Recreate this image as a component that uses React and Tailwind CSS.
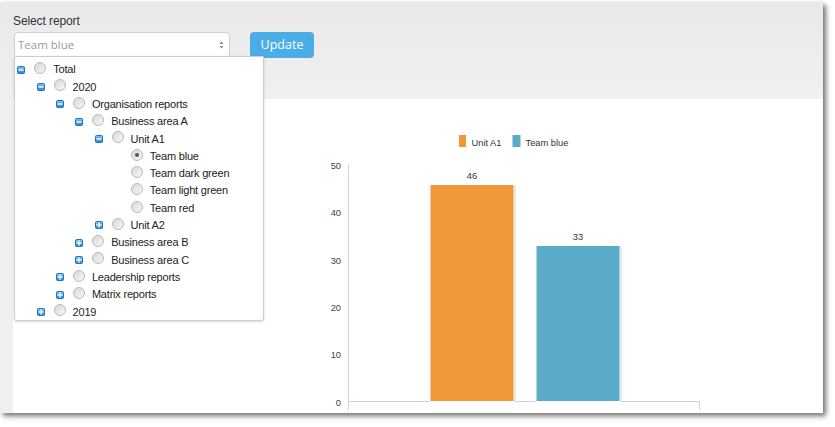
import React from 'react'

const tree = [
  { label: 'Total', level: 0, state: 'open' },
  { label: '2020', level: 1, state: 'open' },
  { label: 'Organisation reports', level: 2, state: 'open' },
  { label: 'Business area A', level: 3, state: 'open' },
  { label: 'Unit A1', level: 4, state: 'open' },
  { label: 'Team blue', level: 5, checked: true },
  { label: 'Team dark green', level: 5 },
  { label: 'Team light green', level: 5 },
  { label: 'Team red', level: 5 },
  { label: 'Unit A2', level: 4, state: 'closed' },
  { label: 'Business area B', level: 3, state: 'closed' },
  { label: 'Business area C', level: 3, state: 'closed' },
  { label: 'Leadership reports', level: 2, state: 'closed' },
  { label: 'Matrix reports', level: 2, state: 'closed' },
  { label: '2019', level: 1, state: 'closed' },
]

function Expander({ state }) {
  if (!state) return <span className="w-[8px] h-[8px] shrink-0" />
  return (
    <svg width="8" height="8" viewBox="0 0 8 8" className="shrink-0">
      <defs>
        <linearGradient id="exp" x1="0" y1="0" x2="0" y2="1">
          <stop offset="0" stopColor="#7cc4f4" />
          <stop offset="1" stopColor="#2b84d2" />
        </linearGradient>
      </defs>
      <rect x="0.5" y="0.5" width="7" height="7" rx="1" fill="url(#exp)" stroke="#2170b8" />
      {state === 'open' ? (
        <rect x="1.5" y="3.3" width="5" height="1.4" fill="#fff" />
      ) : (
        <>
          <rect x="1.2" y="3.4" width="5.6" height="1.2" fill="#fff" />
          <rect x="3.4" y="1.2" width="1.2" height="5.6" fill="#fff" />
        </>
      )}
    </svg>
  )
}

function Radio({ checked }) {
  return (
    <span className="mb-[3px] ml-[9px] flex h-[12px] w-[12px] shrink-0 items-center justify-center rounded-full border border-[#b9b9b9] bg-gradient-to-br from-[#d9d9d9] to-[#f7f7f7]">
      {checked ? <span className="h-[4px] w-[4px] rounded-full bg-[#555]" /> : null}
    </span>
  )
}

function Chart() {
  const ticks = [
    { v: 50, y: 169 },
    { v: 40, y: 216.3 },
    { v: 30, y: 263.6 },
    { v: 20, y: 311 },
    { v: 10, y: 358.3 },
    { v: 0, y: 405.6 },
  ]
  return (
    <svg width="810" height="314" viewBox="13 99 810 314" fontFamily="'Liberation Sans', Arial, sans-serif">
      <rect x="459" y="135" width="7" height="12" fill="#f0973a" />
      <text x="471.5" y="145.5" fontSize="9.3" fill="#333">Unit A1</text>
      <rect x="512.5" y="135" width="8" height="12" fill="#5aabc8" />
      <text x="525.5" y="145.5" fontSize="9.3" fill="#333">Team blue</text>

      {ticks.map((t) => (
        <text key={t.v} x="341" y={t.y} fontSize="9.3" fill="#444" textAnchor="end">
          {t.v}
        </text>
      ))}

      <line x1="348.5" y1="165" x2="348.5" y2="410" stroke="#c7d5e4" />
      <line x1="348" y1="401.5" x2="700" y2="401.5" stroke="#c7d5e4" />
      <line x1="699.5" y1="401" x2="699.5" y2="410" stroke="#c7d5e4" />

      <rect x="431.5" y="185.5" width="84" height="216" fill="#cfcfcf" />
      <rect x="430" y="184.5" width="84" height="217" fill="#f0973a" stroke="#fff" />
      <text x="472" y="179" fontSize="9.3" fill="#333" textAnchor="middle">46</text>

      <rect x="537.5" y="246.5" width="84" height="155" fill="#cfcfcf" />
      <rect x="536" y="245.5" width="84" height="156" fill="#5aabc8" stroke="#fff" />
      <text x="578" y="240" fontSize="9.3" fill="#333" textAnchor="middle">33</text>
    </svg>
  )
}

export default function App() {
  return (
    <div className="min-h-screen bg-white pt-[2px]">
      <div className="relative flex h-[411px] w-[823px] flex-col bg-[#efefef] shadow-[3px_3px_5px_rgba(0,0,0,0.55)]">
        <header className="h-[97px] shrink-0 bg-gradient-to-b from-[#e9e9e9] to-[#f0f0f0] pl-[13px] pt-[11px]">
          <p className="text-[12px] leading-[16px] tracking-[-0.1px] text-[#333] font-['Liberation_Sans',Arial,sans-serif]">
            Select report
          </p>
          <div className="mt-[3px] flex font-['Open_Sans',sans-serif]">
            <div className="ml-[1px] flex h-[26px] w-[216px] items-center justify-between rounded-[4px] border border-[#cfcfcf] bg-white pl-[3px] pr-[5px]">
              <span className="text-[11.5px] text-[#9a9a9a]">Team blue</span>
              <svg width="5" height="8" viewBox="0 0 5 8">
                <path d="M2.5 0.5 L4.5 3 L0.5 3 Z" fill="#888" />
                <path d="M2.5 7.5 L4.5 5 L0.5 5 Z" fill="#888" />
              </svg>
            </div>
            <button className="ml-[20px] h-[26px] w-[64px] rounded-[4px] bg-[#4aade7] text-[12.5px] text-white">
              Update
            </button>
          </div>
        </header>

        <div className="flex flex-1">
          <div className="w-[13px] shrink-0 bg-[#efefef]" />
          <div className="flex-1 bg-white">
            <Chart />
          </div>
        </div>

        <div className="absolute left-[14px] top-[54px] h-[265px] w-[250px] rounded-b-[3px] border border-[#cccccc] bg-white pt-[4px] shadow-[0_1px_3px_rgba(0,0,0,0.15)] font-['Liberation_Sans',Arial,sans-serif]">
          {tree.map((row) => (
            <div
              key={row.label}
              className="flex h-[17.3px] items-center"
              style={{ paddingLeft: 2.3 + row.level * 19.3 }}
            >
              <Expander state={row.state} />
              <Radio checked={row.checked} />
              <span className="ml-[7px] text-[11px] tracking-[-0.2px] text-[#222]">{row.label}</span>
            </div>
          ))}
        </div>
      </div>
    </div>
  )
}
